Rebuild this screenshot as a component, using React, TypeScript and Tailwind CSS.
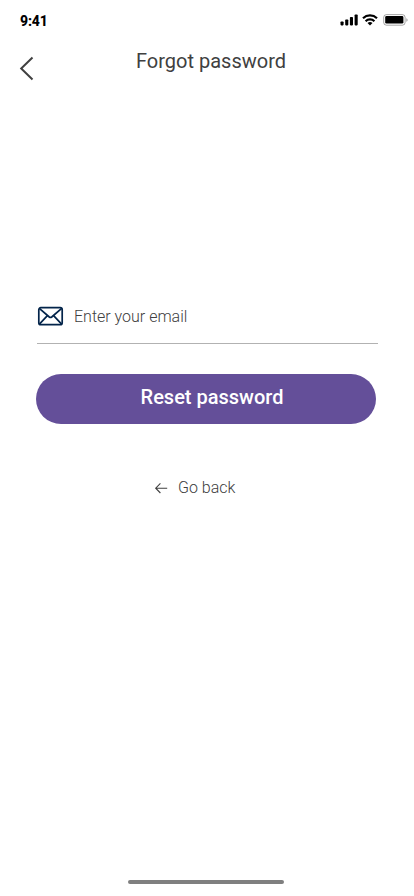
function StatusBar() {
  return (
    <div className="flex h-[42px] items-start justify-between pl-5 pr-[6px]">
      <span className="mt-[12px] text-[14px] leading-[18px] font-extrabold tracking-[-0.15px] text-black">9:41</span>
      <div className="mt-[14px] flex items-center">
        <svg width="18" height="12" viewBox="0 0 18 12" fill="#000">
          <rect x="0.5" y="7.4" width="3.1" height="4" rx="0.8" />
          <rect x="5.2" y="5.4" width="3.1" height="6" rx="0.8" />
          <rect x="9.9" y="2.9" width="3.1" height="8.5" rx="0.8" />
          <rect x="14.6" y="0.5" width="3.1" height="10.9" rx="0.8" />
        </svg>
        <svg className="ml-[4px]" width="16" height="12" viewBox="0 0 16 12" fill="none" stroke="#000" strokeWidth="2.2">
          <path d="M1 4.2a10.2 10.2 0 0 1 14 0" />
          <path d="M3.6 7.2a6.3 6.3 0 0 1 8.8 0" />
          <path d="M5.5 9.1a3.6 3.6 0 0 1 5 0L8 11.6z" fill="#000" stroke="none" />
        </svg>
        <svg className="ml-[4px]" width="26" height="12" viewBox="0 0 26 12">
          <rect x="1.7" y="0.6" width="21.4" height="10.6" rx="2.8" fill="none" stroke="#000" strokeOpacity="0.35" />
          <rect x="3.2" y="2.1" width="18.2" height="7.5" rx="1.3" fill="#000" />
          <path d="M24.4 4.2v3.6c.7-.3 1.2-1 1.2-1.8s-.5-1.5-1.2-1.8z" fill="#000" fillOpacity="0.4" />
        </svg>
      </div>
    </div>
  );
}

export default function App() {
  return (
    <div className="flex h-[896px] w-[414px] flex-col overflow-hidden bg-white font-[Roboto,sans-serif]">
      <StatusBar />
      <header className="flex h-[58px] items-start">
        <button aria-label="Back" className="ml-[19px] mt-[14px] w-[16px]">
          <svg width="16" height="25" viewBox="0 0 16 25" fill="none" stroke="#404040" strokeWidth="2">
            <path d="M13.5 1.5 2.2 12.5l11.3 11" />
          </svg>
        </button>
        <h1 className="ml-[101px] mt-[7px] whitespace-nowrap text-[20px] leading-6 font-normal text-[#404040]">Forgot password</h1>
      </header>
      <main className="flex flex-col pt-[200px]">
        <label className="ml-[37px] flex h-[44px] w-[341px] items-start border-b border-[#b2b2b2]">
          <svg className="mt-[6px]" width="27" height="21" viewBox="0 0 27 21" fill="none" stroke="#03244a" strokeWidth="1.7" strokeLinejoin="round">
            <rect x="1.8" y="1.7" width="23.4" height="17" rx="2" />
            <path d="m2.3 2.3 10 8.7q1.2.9 2.4 0l10-8.7M2.4 18.1l8-8.4M24.6 18.1l-8-8.4" />
          </svg>
          <span className="ml-[10px] mt-[7px] text-[16px] leading-5 font-light text-[#404040]">Enter your email</span>
        </label>
        <button className="ml-[36px] mt-[30px] flex h-[50px] w-[340px] justify-center rounded-full bg-[#644f99] pl-[12px] pt-[11px] text-[20px] leading-6 font-medium text-white">
          Reset password
        </button>
        <button className="ml-[154px] mt-[54px] flex items-center text-[16px] leading-5 font-light text-[#404040]">
          <svg width="14" height="12" viewBox="0 0 14 12" fill="none" stroke="#404040" strokeWidth="1.1">
            <path d="M13.2 6.2H1.8M6.4 1.4 1.7 6.2 6.4 11" />
          </svg>
          <span className="ml-[10px]">Go back</span>
        </button>
      </main>
      <div className="mb-[12px] ml-[127.5px] mt-auto h-[4px] w-[156px] rounded-full bg-[#7f7f7f]" />
    </div>
  );
}
